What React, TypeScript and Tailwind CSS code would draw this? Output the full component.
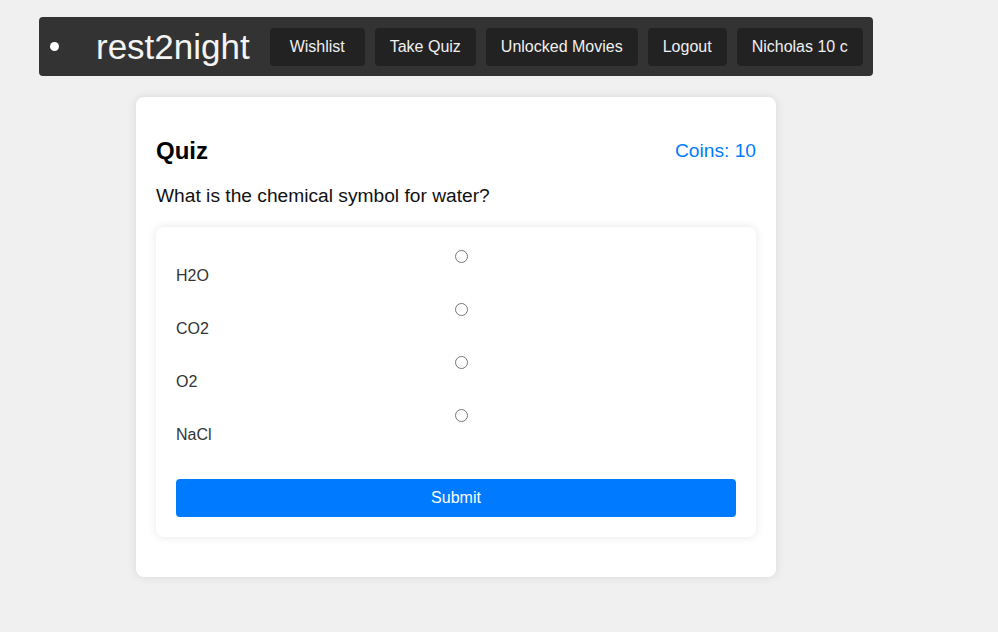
import React, { useState } from "react";

const options = ["H2O", "CO2", "O2", "NaCl"];
const navItems = ["Wishlist", "Take Quiz", "Unlocked Movies", "Logout", "Nicholas 10 c"];

const App: React.FC = () => {
  const [picked, setPicked] = useState<string>("");

  return (
    <div className="min-h-screen bg-[#f0f0f0] pt-[17px] font-['Liberation_Sans',Arial,sans-serif]">
      <nav className="ml-[39px] flex h-[59px] w-[834px] items-center rounded bg-[#333333]">
        <span className="ml-[11px] h-[9px] w-[9px] shrink-0 rounded-full bg-white" />
        <div className="ml-[37px] shrink-0 text-[35px] leading-none whitespace-nowrap text-[#f4f4f4]">rest2night</div>
        <div className="ml-[20px] flex shrink-0 gap-[10px]">
          {navItems.map((item, i) => (
            <button
              key={item}
              className={`h-[38px] shrink-0 whitespace-nowrap rounded bg-[#222222] px-[15px] text-base text-[#f0f0f0] ${i === 0 ? "w-[95px]" : ""}`}
            >
              {item}
            </button>
          ))}
        </div>
      </nav>

      <div className="ml-[136px] mt-[21px] w-[640px] rounded-lg bg-white p-5 shadow-[0_0_10px_rgba(0,0,0,0.1)]">
        <div className="mt-5 flex items-center justify-between">
          <h2 className="text-2xl leading-7 font-bold text-black">Quiz</h2>
          <span className="text-[19.2px] text-[#007bff]">Coins: 10</span>
        </div>
        <p className="mt-[19px] text-[19.2px] leading-[22px] text-[#111]">What is the chemical symbol for water?</p>

        <div className="mb-5 mt-[20px] rounded-lg bg-white p-5 shadow-[0_0_10px_rgba(0,0,0,0.1)]">
          {options.map((opt) => (
            <label key={opt} className="mb-[15px] block text-base leading-[18px] text-[#333]">
              <div className="flex h-[19px] justify-center pl-[10px]">
                <input
                  type="radio"
                  name="answer"
                  checked={picked === opt}
                  onChange={() => setPicked(opt)}
                  className="mt-[3px] h-[13px] w-[13px]"
                />
              </div>
              <div className="mt-[1px]">{opt}</div>
            </label>
          ))}
          <button className="mt-5 h-[38px] w-full rounded bg-[#007bff] text-base text-white">Submit</button>
        </div>
      </div>
    </div>
  );
};

export default App;
